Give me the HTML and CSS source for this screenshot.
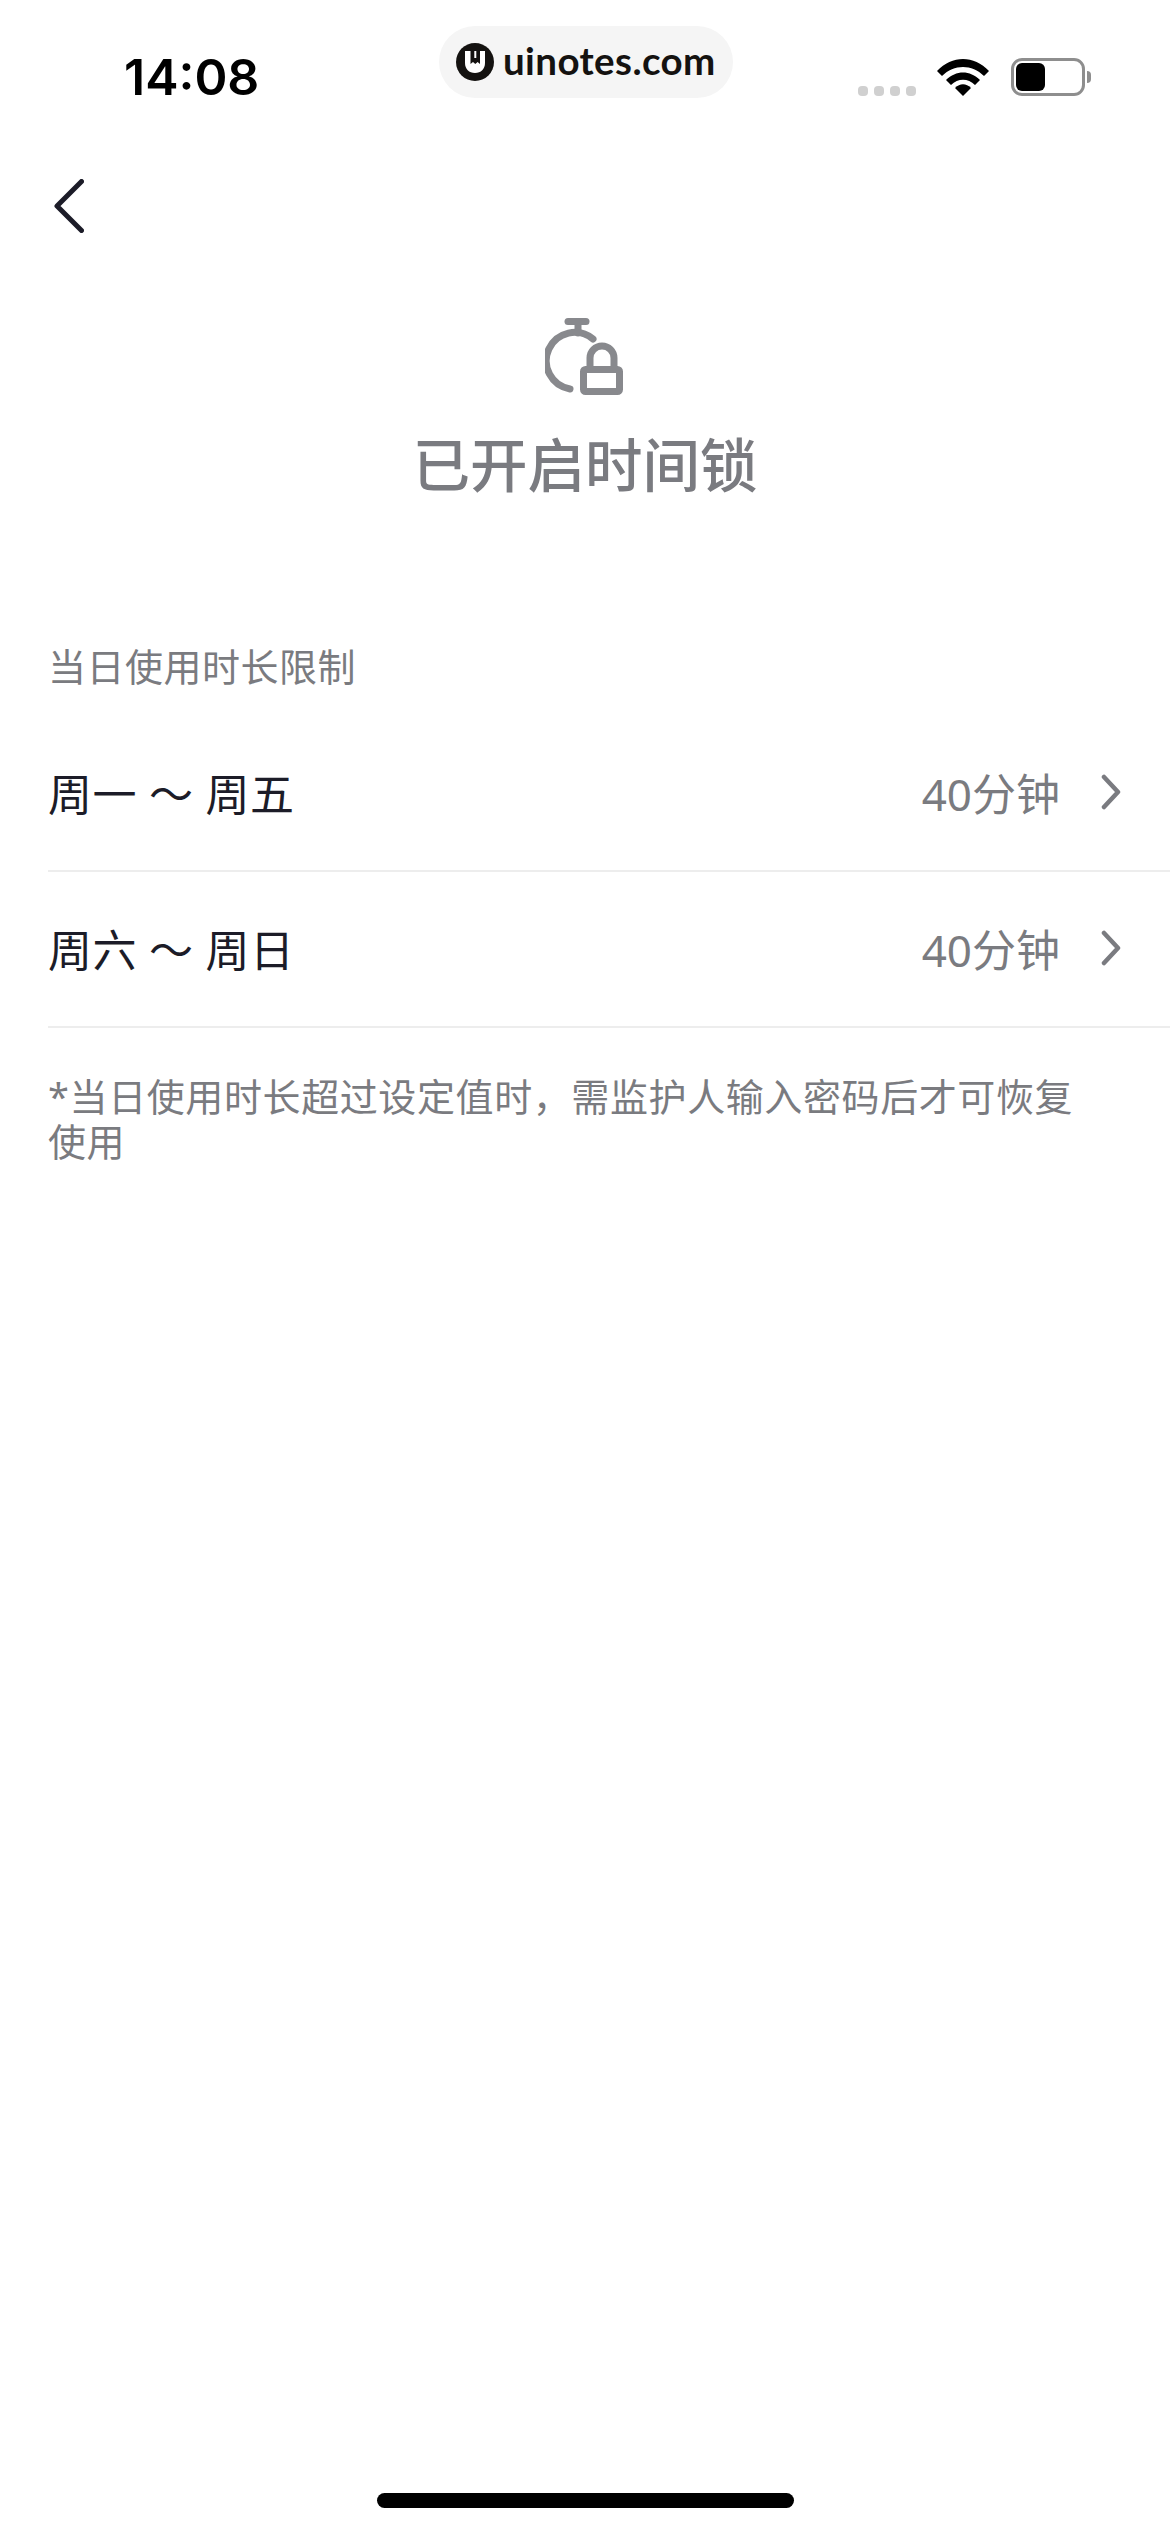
FILE: index.html
```html
<!DOCTYPE html>
<html lang="zh">
<head>
  <meta charset="UTF-8">
  <title>时间锁</title>
  <link rel="stylesheet" href="styles.css">
</head>
<body>
  <div class="page">
    <div class="status-bar">
      <span class="clock">14:08</span>
      <div class="status-icons">
        <div class="signal"><i></i><i></i><i></i><i></i></div>
        <svg class="wifi" width="52" height="38" viewBox="0 0 52 38">
          <path d="M0 13 C15 -3 37 -3 52 13 L47 18 C35 6 17 6 5 18 Z" fill="#000"/>
          <path d="M9 22 C19 12 33 12 43 22 L38 27 C31 20 21 20 14 27 Z" fill="#000"/>
          <path d="M18 30 C23 25 29 25 34 30 L26 38 Z" fill="#000"/>
        </svg>
        <div class="battery">
          <div class="battery-body"><div class="battery-level"></div></div>
          <div class="battery-tip"></div>
        </div>
      </div>
    </div>

    <div class="watermark">
      <svg width="38" height="38" viewBox="0 0 38 38">
        <circle cx="19" cy="19" r="19" fill="#141210"/>
        <path d="M9 8 H14.500 V21 L17 19 L19.300 21 L21.600 19 L24 21 V8 H29 V20 C29 26 25 30 19 30 C13 30 9 26 9 20 Z" fill="#fff"/>
        <path d="M18.300 8 H20.300 V15 H18.300 Z" fill="#fff"/>
      </svg>
      <span>uinotes.com</span>
    </div>

    <div class="nav">
      <svg class="back" width="30" height="54" viewBox="0 0 30 54">
        <path d="M27.500 2.500 L3 27 L27.500 51.500" fill="none" stroke="#1c1c28" stroke-width="5" stroke-linecap="round" stroke-linejoin="round"/>
      </svg>
    </div>

    <div class="hero">
      <svg class="lock-icon" width="80" height="78" viewBox="0 0 80 78">
        <g fill="none" stroke="#88898d" stroke-width="7" stroke-linecap="round">
          <path d="M23 3.500 H41"/>
          <path d="M33 4 V15"/>
          <path d="M48 21 A28.500 28.500 0 1 0 25 71"/>
          <path d="M45 50 V40 A12 12 0 0 1 69 40 V50"/>
          <rect x="38.500" y="51.500" width="36" height="22" rx="2"/>
        </g>
      </svg>
      <h1 class="title">已开启时间锁</h1>
    </div>

    <div class="section-label">当日使用时长限制</div>
    <div class="row">
      <span class="row-name">周一 ～ 周五</span>
      <span class="row-value">40分钟</span>
      <svg class="chevron" width="20" height="36" viewBox="0 0 20 36">
        <path d="M3 3 L17 18 L3 33" fill="none" stroke="#7a7b80" stroke-width="4.500" stroke-linecap="round" stroke-linejoin="round"/>
      </svg>
    </div>
    <div class="row">
      <span class="row-name">周六 ～ 周日</span>
      <span class="row-value">40分钟</span>
      <svg class="chevron" width="20" height="36" viewBox="0 0 20 36">
        <path d="M3 3 L17 18 L3 33" fill="none" stroke="#7a7b80" stroke-width="4.500" stroke-linecap="round" stroke-linejoin="round"/>
      </svg>
    </div>
    <p class="note">*当日使用时长超过设定值时，需监护人输入密码后才可恢复使用</p>

    <div class="home-bar"></div>
  </div>
</body>
</html>
```

FILE: styles.css
```css
* {
  box-sizing: border-box;
}

html, body {
  margin: 0;
  padding: 0;
  background: #fff;
}

body {
  font-family: "Noto Sans", "Noto Sans CJK SC", sans-serif;
  color: #1c1c28;
}

.page {
  position: relative;
  display: flex;
  flex-direction: column;
  height: 2532px;
  overflow: hidden;
}

.status-bar {
  display: flex;
  justify-content: space-between;
  align-items: flex-start;
  height: 98px;
  padding: 48px 79px 0 124px;
}

.clock {
  font-family: Inter, sans-serif;
  font-size: 50px;
  line-height: 58px;
  font-weight: 600;
  color: #000;
}

.status-icons {
  display: flex;
  align-items: flex-end;
  margin-top: 10px;
}

.signal {
  display: flex;
  gap: 6px;
  margin-right: 21px;
}

.signal i {
  width: 10px;
  height: 10px;
  border-radius: 4px;
  background: #d0d0d0;
}

.battery {
  display: flex;
  align-items: center;
  margin-left: 22px;
}

.battery-body {
  width: 74px;
  height: 38px;
  padding: 2px;
  border: 3px solid #8e8e8e;
  border-radius: 11px;
}

.battery-level {
  width: 29px;
  height: 100%;
  border-radius: 6px;
  background: #000;
}

.battery-tip {
  width: 4px;
  height: 12px;
  margin-left: 2px;
  border-radius: 0 6px 6px 0;
  background: #8e8e8e;
}

.watermark {
  position: absolute;
  top: 26px;
  left: 439px;
  display: flex;
  align-items: center;
  gap: 9px;
  width: 294px;
  height: 72px;
  padding-left: 17px;
  border-radius: 36px;
  background: #f5f5f5;
}

.watermark span {
  margin-top: -5px;
  font-family: Lato, sans-serif;
  font-size: 38.5px;
  letter-spacing: 0.4px;
  font-weight: 700;
  color: #141210;
}

.nav {
  height: 220px;
  padding: 81px 0 0 54px;
}

.back {
  display: block;
}

.hero {
  display: flex;
  flex-direction: column;
  align-items: center;
}

.lock-icon {
  display: block;
}

.title {
  margin: 29px 0 0;
  font-size: 57.500px;
  line-height: 80px;
  font-weight: 500;
  color: #7a7b80;
}

.section-label {
  margin-top: 134px;
  padding-left: 48px;
  font-size: 38px;
  line-height: 54px;
  letter-spacing: 0.5px;
  color: #7a7b80;
}

.row {
  display: flex;
  align-items: center;
  height: 156px;
  margin-left: 48px;
  padding: 0 49px 3px 0;
  border-bottom: 2px solid #ededed;
}

.section-label + .row {
  margin-top: 23px;
}

.row-name {
  flex: 1;
  font-size: 44px;
  letter-spacing: 0.5px;
}

.row-value {
  font-size: 44px;
  color: #7a7b80;
}

.chevron {
  margin-left: 41px;
}

.note {
  margin: 46px 0 0;
  padding: 0 96px 0 48px;
  font-size: 38px;
  line-height: 45px;
  letter-spacing: 0.6px;
  color: #7a7b80;
}

.home-bar {
  width: 417px;
  height: 15px;
  margin: auto auto 24px;
  border-radius: 8px;
  background: #000;
}
```
